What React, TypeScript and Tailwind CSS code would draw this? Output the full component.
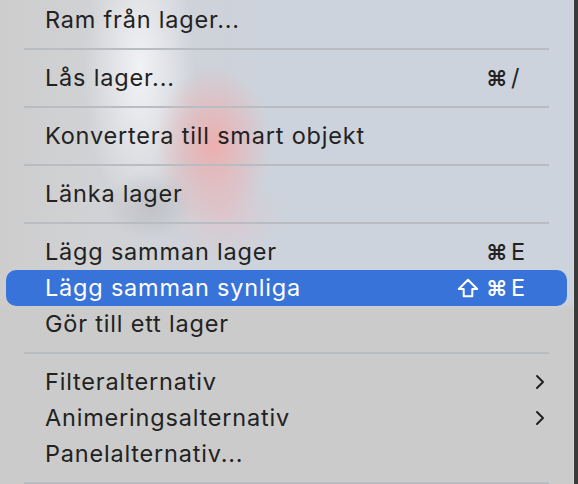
import React from 'react'

type Item = {
  label: string
  shortcut?: string[]
  submenu?: boolean
  active?: boolean
}

const groups: Item[][] = [
  [{ label: 'Ram från lager...' }],
  [{ label: 'Lås lager...', shortcut: ['⌘', '/'] }],
  [{ label: 'Konvertera till smart objekt' }],
  [{ label: 'Länka lager' }],
  [
    { label: 'Lägg samman lager', shortcut: ['⌘', 'E'] },
    { label: 'Lägg samman synliga', shortcut: ['⇧', '⌘', 'E'], active: true },
    { label: 'Gör till ett lager' },
  ],
  [
    { label: 'Filteralternativ', submenu: true },
    { label: 'Animeringsalternativ', submenu: true },
    { label: 'Panelalternativ...' },
  ],
]

function Chevron() {
  return (
    <svg width="12" height="18" viewBox="0 0 12 18" fill="none">
      <path d="M3 3l6 6-6 6" stroke="currentColor" strokeWidth="2" strokeLinecap="round" strokeLinejoin="round" />
    </svg>
  )
}

function ShiftIcon() {
  return (
    <svg width="22" height="20" viewBox="0 0 22 20" fill="none">
      <path d="M11 1.8L20.2 11H15.3V18.2H6.7V11H1.8Z" stroke="currentColor" strokeWidth="2" strokeLinejoin="round" />
    </svg>
  )
}

function Key({ k }: { k: string }) {
  if (k === '⇧') return <ShiftIcon />
  if (k === '⌘') return <span className="w-[18px] text-center text-[22px] font-semibold">⌘</span>
  return <span className="w-[15px] text-left">{k}</span>
}

function Row({ item }: { item: Item }) {
  return (
    <div
      className={
        'mx-[6px] flex h-[36px] items-center rounded-[10px] pl-[39px] pr-[41px] ' +
        (item.active ? 'bg-[#3873d9] text-white' : 'text-[#222222]')
      }
    >
      <span className="flex-1 text-[23.5px] leading-none tracking-[0.8px]">{item.label}</span>
      {item.shortcut && (
        <span className="flex items-center gap-[7px] text-[23.5px] leading-none">
          {item.shortcut.map((k, i) => (
            <Key key={i} k={k} />
          ))}
        </span>
      )}
      {item.submenu && (
        <span className="-mr-[20px]">
          <Chevron />
        </span>
      )}
    </div>
  )
}

export default function App() {
  return (
    <div className="flex h-[484px] w-[578px] overflow-hidden bg-[#3a3a3a] font-['Inter','Noto_Sans',sans-serif]">
      <div className="h-full w-[574px] border-r border-[#d9d9d9] bg-[radial-gradient(ellipse_58px_80px_at_213px_145px,rgba(240,170,170,0.9),transparent),radial-gradient(ellipse_55px_45px_at_225px_215px,rgba(230,190,196,0.55),transparent),radial-gradient(ellipse_45px_35px_at_150px_205px,rgba(150,150,155,0.3),transparent),radial-gradient(ellipse_55px_150px_at_140px_70px,rgba(246,246,249,0.9),transparent),linear-gradient(180deg,transparent_0%,transparent_62%,#cbcbcb_64%),linear-gradient(90deg,#cdcdcd_0px,#d1d2d5_90px,#cdd3dc_260px)] pt-[2px]">
        {groups.map((g, gi) => (
          <div key={gi}>
            {g.map((it) => (
              <Row key={it.label} item={it} />
            ))}
            <div className="flex h-[22px] items-center px-[24px]">
              <div className="h-[2px] w-full bg-[#b9bcc1]" />
            </div>
          </div>
        ))}
      </div>
    </div>
  )
}
